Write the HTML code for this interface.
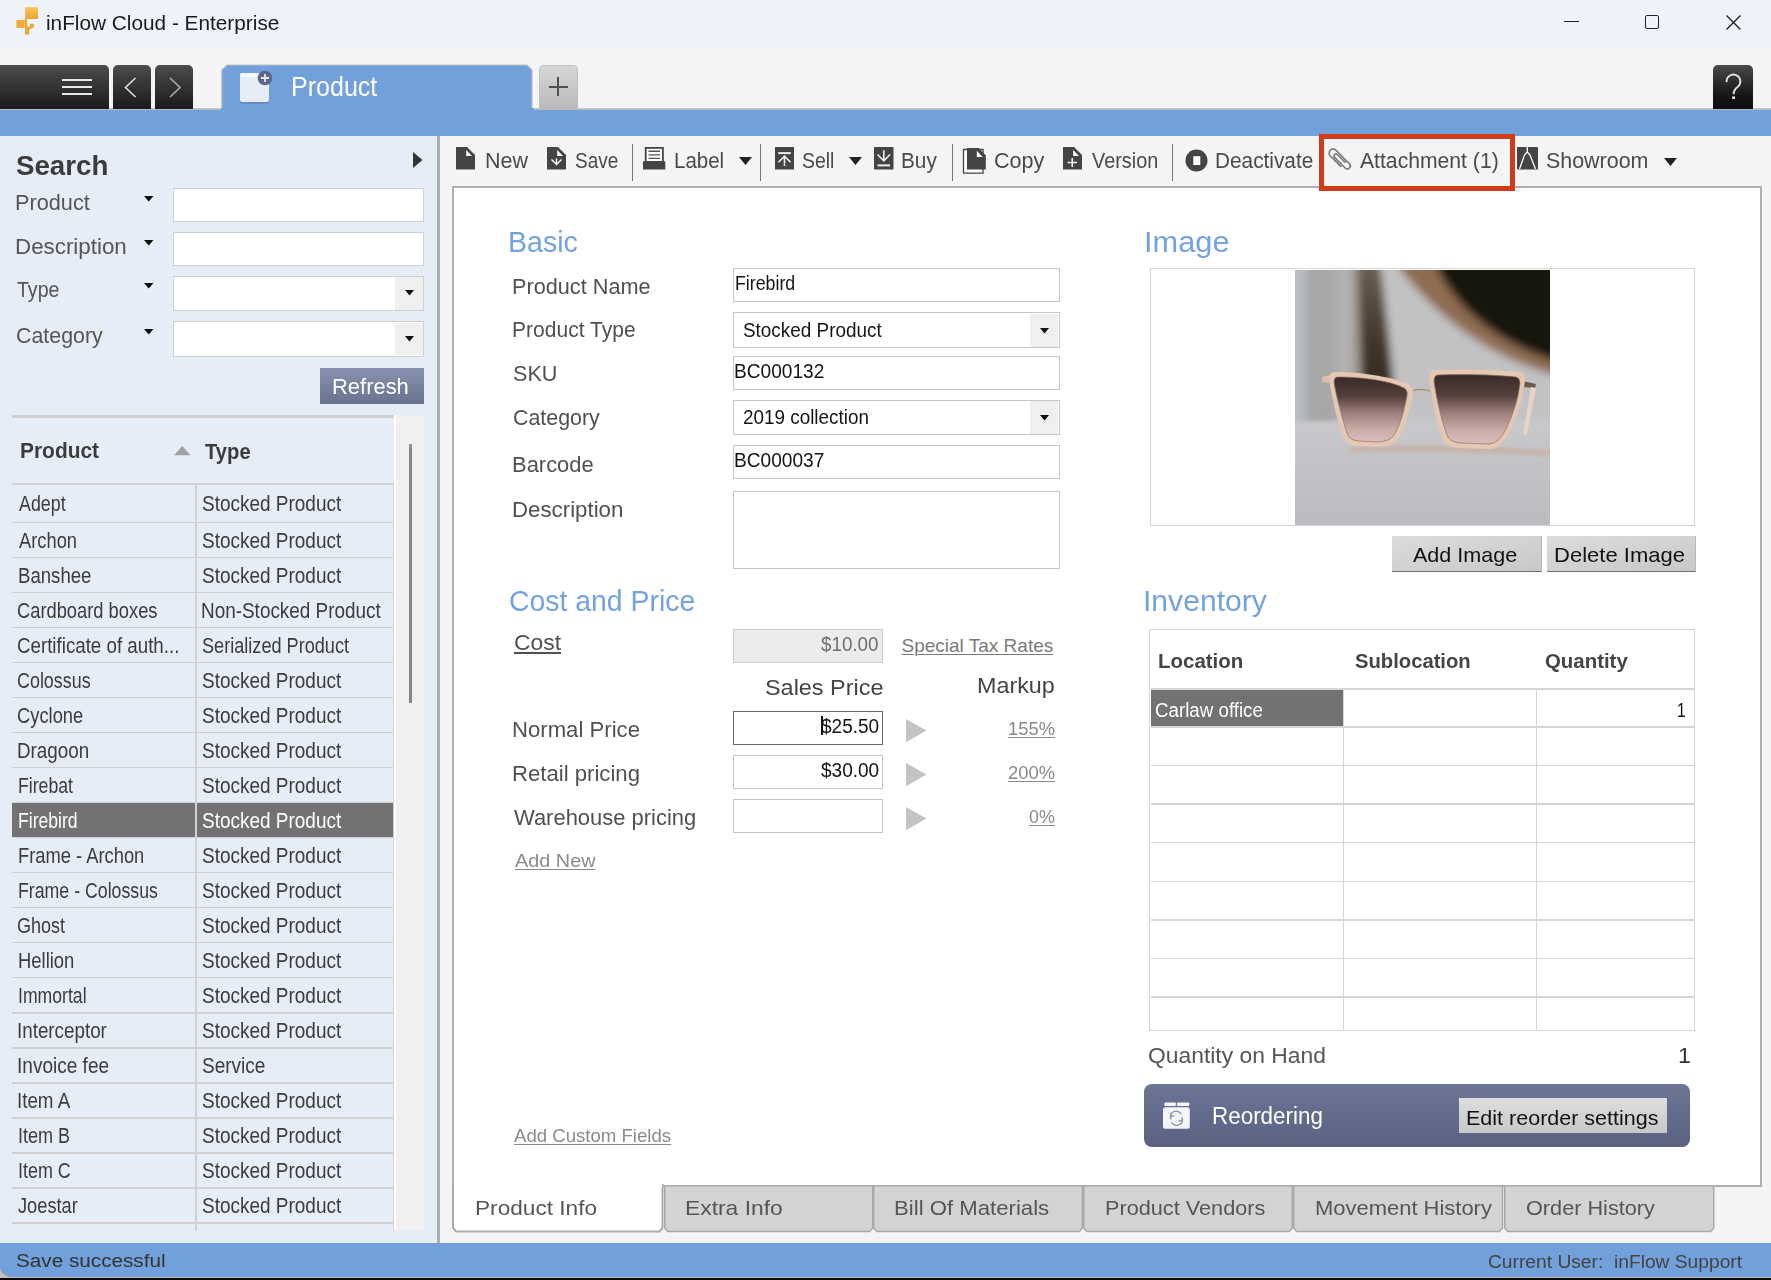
<!DOCTYPE html>
<html><head><meta charset="utf-8"><title>inFlow Cloud - Enterprise</title>
<style>
html,body{margin:0;padding:0;}
body{width:1771px;height:1280px;position:relative;overflow:hidden;background:#f4f4f4;font-family:"Liberation Sans",sans-serif;}
svg{overflow:visible}
</style></head><body>
<div style="position:absolute;left:0px;top:0px;width:1771px;height:48.6px;background:#eef3fa"></div>
<svg style="position:absolute;left:14px;top:6px;" width="26" height="30" viewBox="0 0 26 30">
<defs><linearGradient id="lg1" x1="0" y1="0" x2="0" y2="1"><stop offset="0" stop-color="#f7c64e"/><stop offset="1" stop-color="#eba335"/></linearGradient></defs>
<rect x="11.2" y="1.2" width="12.8" height="11.8" fill="url(#lg1)"/>
<rect x="2.4" y="14" width="8.2" height="8" fill="#eead3c"/>
<path d="M11.9 12.5 V18.3 Q11.9 22.3 14.9 22.3 Q17.1 22.3 17.6 20" fill="none" stroke="#edab3a" stroke-width="2.5"/><circle cx="17.9" cy="19.8" r="2.3" fill="#eeaa3a"/><rect x="11" y="22" width="4.25" height="6.7" fill="#eca536"/>
</svg>
<div style="position:absolute;left:1564px;top:21px;width:15px;height:1.3px;background:#222"></div>
<div style="position:absolute;left:1645px;top:14.5px;width:12px;height:12px;border:1.4px solid #222;border-radius:2px"></div>
<svg style="position:absolute;left:1726px;top:14.5px;" width="15" height="15" viewBox="0 0 15 15"><path d="M0.5 0.5 L14.5 14.5 M14.5 0.5 L0.5 14.5" stroke="#222" stroke-width="1.4"/></svg>
<div style="position:absolute;left:0px;top:48.6px;width:1771px;height:62px;background:#f4f4f4"></div>
<div style="position:absolute;left:0px;top:108.2px;width:1771px;height:2px;background:linear-gradient(#d0d0d0,#a9b0bc)"></div>
<div style="position:absolute;left:0px;top:65px;width:109px;height:44px;background:linear-gradient(#4c4c4c,#1a1a1a);border-radius:0 5px 0 0"></div>
<div style="position:absolute;left:113px;top:65px;width:38px;height:44px;background:linear-gradient(#4c4c4c,#1a1a1a);border-radius:5px 5px 0 0"></div>
<div style="position:absolute;left:155px;top:65px;width:38px;height:44px;background:linear-gradient(#4c4c4c,#1a1a1a);border-radius:5px 5px 0 0"></div>
<div style="position:absolute;left:62px;top:79px;width:30px;height:2px;background:#e8e8e8"></div>
<div style="position:absolute;left:62px;top:86px;width:30px;height:2px;background:#e8e8e8"></div>
<div style="position:absolute;left:62px;top:93px;width:30px;height:2px;background:#e8e8e8"></div>
<svg style="position:absolute;left:113px;top:65px;" width="38" height="44" viewBox="0 0 38 44"><path d="M22.5 13 L12.5 22.5 L22.5 32" fill="none" stroke="#ddd" stroke-width="1.6"/></svg>
<svg style="position:absolute;left:155px;top:65px;" width="38" height="44" viewBox="0 0 38 44"><path d="M15 13 L25 22.5 L15 32" fill="none" stroke="#aaa" stroke-width="1.6"/></svg>
<svg style="position:absolute;left:221px;top:64px;" width="313" height="47" viewBox="0 0 313 47"><path d="M0.8 47 L0.8 6 L6 1 L306 1 L311 6 L311 47 Z" fill="#72a0da" stroke="#bdbdbd" stroke-width="1.2"/><rect x="0" y="44" width="313" height="4" fill="#72a0da"/></svg>
<svg style="position:absolute;left:238px;top:70px;" width="36" height="36" viewBox="0 0 36 36">
<rect x="2" y="5" width="29" height="29" rx="2.5" fill="#4e6a98" opacity="0.35"/>
<rect x="2" y="3" width="29" height="29" rx="2.5" fill="#e6edf8"/>
<rect x="2" y="3" width="29" height="4" rx="2" fill="#f4f7fb"/>
<circle cx="27" cy="8" r="7.3" fill="#5b6786"/>
<path d="M23 8 H31 M27 4 V12" stroke="#e8e8e8" stroke-width="1.8"/>
</svg>
<div style="position:absolute;left:538.5px;top:65px;width:39.5px;height:44.5px;background:linear-gradient(#d6d6d6,#b9b9b9);border:1px solid #c0c0c0;border-bottom:none;border-radius:5px 5px 0 0;box-sizing:border-box"></div>
<div style="position:absolute;left:548.8px;top:85.5px;width:19px;height:2px;background:#505050"></div>
<div style="position:absolute;left:557.2px;top:77px;width:2px;height:19px;background:#505050"></div>
<div style="position:absolute;left:1712.7px;top:64.5px;width:40.3px;height:44.5px;background:linear-gradient(#4a4a4a,#151515 70%,#0e0e0e);border-radius:5px 5px 0 0"></div>
<svg style="position:absolute;left:1712.7px;top:64.5px;" width="40.3" height="44.5" viewBox="0 0 40.3 44.5"><path d="M13.6 17.2 A6.9 6.9 0 1 1 24.8 21.8 Q20.6 25 20.6 29.3" fill="none" stroke="#e2e2e2" stroke-width="1.9"/><rect x="19.2" y="31.4" width="2.8" height="2.6" fill="#e2e2e2"/></svg>
<div style="position:absolute;left:0px;top:110.2px;width:1771px;height:26.3px;background:#72a0da"></div>
<div style="position:absolute;left:0px;top:136px;width:436.5px;height:1107px;background:#e6edf7"></div>
<div style="position:absolute;left:436.5px;top:136px;width:3.5px;height:1107px;background:#adadad"></div>
<svg style="position:absolute;left:413px;top:152px;" width="10" height="16" viewBox="0 0 10 16"><path d="M0 0 L9.5 8 L0 16 Z" fill="#333"/></svg>
<svg style="position:absolute;left:144px;top:196.2px;" width="10" height="6" viewBox="0 0 10 6"><path d="M0 0 L9.5 0 L4.75 5.5 Z" fill="#111"/></svg>
<div style="position:absolute;left:172.8px;top:188px;width:251px;height:33.8px;background:#fff;border:1.5px solid #d0d0d0;box-sizing:border-box"></div>
<svg style="position:absolute;left:144px;top:239.7px;" width="10" height="6" viewBox="0 0 10 6"><path d="M0 0 L9.5 0 L4.75 5.5 Z" fill="#111"/></svg>
<div style="position:absolute;left:172.8px;top:232px;width:251px;height:33.8px;background:#fff;border:1.5px solid #d0d0d0;box-sizing:border-box"></div>
<svg style="position:absolute;left:144px;top:283.3px;" width="10" height="6" viewBox="0 0 10 6"><path d="M0 0 L9.5 0 L4.75 5.5 Z" fill="#111"/></svg>
<div style="position:absolute;left:172.8px;top:275.5px;width:251px;height:35.5px;background:#fff;border:1.5px solid #d0d0d0;box-sizing:border-box"></div>
<svg style="position:absolute;left:144px;top:328.7px;" width="10" height="6" viewBox="0 0 10 6"><path d="M0 0 L9.5 0 L4.75 5.5 Z" fill="#111"/></svg>
<div style="position:absolute;left:172.8px;top:321px;width:251px;height:35.5px;background:#fff;border:1.5px solid #d0d0d0;box-sizing:border-box"></div>
<div style="position:absolute;left:395px;top:277.0px;width:27.5px;height:32.5px;background:#efefef"></div>
<svg style="position:absolute;left:405px;top:290.3px;" width="9" height="6" viewBox="0 0 9 6"><path d="M0 0 L9 0 L4.5 5.6 Z" fill="#111"/></svg>
<div style="position:absolute;left:395px;top:322.5px;width:27.5px;height:32.5px;background:#efefef"></div>
<svg style="position:absolute;left:405px;top:335.8px;" width="9" height="6" viewBox="0 0 9 6"><path d="M0 0 L9 0 L4.5 5.6 Z" fill="#111"/></svg>
<div style="position:absolute;left:319.5px;top:368px;width:104.5px;height:36px;background:linear-gradient(#8891ad,#69728f)"></div>
<div style="position:absolute;left:11.5px;top:415.3px;width:383px;height:2.8px;background:#d0d0d0"></div>
<div style="position:absolute;left:394.4px;top:415px;width:1.6px;height:815px;background:#ffffff"></div>
<div style="position:absolute;left:396px;top:415px;width:28px;height:815px;background:#f0f0f0"></div>
<div style="position:absolute;left:408.7px;top:444.4px;width:3.4px;height:258.6px;background:linear-gradient(#9a9a9a,#858585 6px)"></div>
<svg style="position:absolute;left:174px;top:446px;" width="16.5" height="9.5" viewBox="0 0 16.5 9.5"><path d="M0 9.2 L8.25 0 L16.5 9.2 Z" fill="#a3a3a3"/></svg>
<div style="position:absolute;left:11.5px;top:483px;width:382.5px;height:2px;background:#d2d2d2"></div>
<div style="position:absolute;left:12px;top:521.5px;width:382px;height:1.6px;background:#d0d0d0"></div>
<div style="position:absolute;left:12px;top:556.53px;width:382px;height:1.6px;background:#d0d0d0"></div>
<div style="position:absolute;left:12px;top:591.56px;width:382px;height:1.6px;background:#d0d0d0"></div>
<div style="position:absolute;left:12px;top:626.59px;width:382px;height:1.6px;background:#d0d0d0"></div>
<div style="position:absolute;left:12px;top:661.62px;width:382px;height:1.6px;background:#d0d0d0"></div>
<div style="position:absolute;left:12px;top:696.65px;width:382px;height:1.6px;background:#d0d0d0"></div>
<div style="position:absolute;left:12px;top:731.6800000000001px;width:382px;height:1.6px;background:#d0d0d0"></div>
<div style="position:absolute;left:12px;top:766.71px;width:382px;height:1.6px;background:#d0d0d0"></div>
<div style="position:absolute;left:12px;top:801.74px;width:382px;height:1.6px;background:#d0d0d0"></div>
<div style="position:absolute;left:12px;top:803.3399999999999px;width:182.5px;height:34.229999999999976px;background:#727272"></div>
<div style="position:absolute;left:197px;top:803.3399999999999px;width:196px;height:34.229999999999976px;background:#727272"></div>
<div style="position:absolute;left:12px;top:836.77px;width:382px;height:1.6px;background:#d0d0d0"></div>
<div style="position:absolute;left:12px;top:871.8px;width:382px;height:1.6px;background:#d0d0d0"></div>
<div style="position:absolute;left:12px;top:906.83px;width:382px;height:1.6px;background:#d0d0d0"></div>
<div style="position:absolute;left:12px;top:941.86px;width:382px;height:1.6px;background:#d0d0d0"></div>
<div style="position:absolute;left:12px;top:976.89px;width:382px;height:1.6px;background:#d0d0d0"></div>
<div style="position:absolute;left:12px;top:1011.9200000000001px;width:382px;height:1.6px;background:#d0d0d0"></div>
<div style="position:absolute;left:12px;top:1046.95px;width:382px;height:1.6px;background:#d0d0d0"></div>
<div style="position:absolute;left:12px;top:1081.98px;width:382px;height:1.6px;background:#d0d0d0"></div>
<div style="position:absolute;left:12px;top:1117.01px;width:382px;height:1.6px;background:#d0d0d0"></div>
<div style="position:absolute;left:12px;top:1152.04px;width:382px;height:1.6px;background:#d0d0d0"></div>
<div style="position:absolute;left:12px;top:1187.07px;width:382px;height:1.6px;background:#d0d0d0"></div>
<div style="position:absolute;left:12px;top:1222.1000000000001px;width:382px;height:1.6px;background:#d0d0d0"></div>
<div style="position:absolute;left:195.2px;top:485px;width:1.7px;height:745.5px;background:#d0d0d0"></div>
<div style="position:absolute;left:392.6px;top:485px;width:1.6px;height:745.5px;background:#d0d0d0"></div>
<div style="position:absolute;left:440px;top:136px;width:1331px;height:1107px;background:#f4f4f4"></div>
<svg style="position:absolute;left:456px;top:147px;" width="19" height="23" viewBox="0 0 19 23"><path d="M0 0 H11 L19 8 V22.5 H0 Z" fill="#444"/><path d="M10.2 3 V9 H16 Z" fill="#fff"/></svg>
<svg style="position:absolute;left:547px;top:147px;" width="19" height="23" viewBox="0 0 19 23"><path d="M0 0 H11 L19 8 V22.5 H0 Z" fill="#444"/><path d="M10.2 3 V9 H16 Z" fill="#fff"/><path d="M4.5 12.5 L9.5 17.5 L14.5 12.5 M9.5 11.5 V18" fill="none" stroke="#fff" stroke-width="1.4"/></svg>
<svg style="position:absolute;left:643.3px;top:147px;" width="23" height="23" viewBox="0 0 23 23"><rect x="2.7" y="0.9" width="17.2" height="14" fill="#fff" stroke="#444" stroke-width="1.8"/><path d="M5.5 4.3 H17 M5.5 7.9 H17 M5.5 11.4 H17" stroke="#555" stroke-width="1.4"/><rect x="0" y="14.3" width="22.3" height="8.2" fill="#444"/></svg>
<div style="position:absolute;left:631.5px;top:143.5px;width:1.5px;height:37px;background:#777"></div>
<svg style="position:absolute;left:739px;top:157px;" width="13" height="8" viewBox="0 0 13 8"><path d="M0 0 H13 L6.5 8 Z" fill="#222"/></svg>
<div style="position:absolute;left:759.5px;top:143.5px;width:1.5px;height:37px;background:#777"></div>
<svg style="position:absolute;left:774.6px;top:147.1px;" width="19" height="22.5" viewBox="0 0 19 22.5"><rect width="19" height="22.5" fill="#444"/><path d="M3.2 6.1 H15.8" stroke="#eee" stroke-width="2"/><path d="M3.5 15.2 L9.5 9.2 L15.5 15.2 M9.5 9.5 V19" fill="none" stroke="#eee" stroke-width="1.6"/></svg>
<svg style="position:absolute;left:849px;top:157px;" width="13" height="8" viewBox="0 0 13 8"><path d="M0 0 H13 L6.5 8 Z" fill="#222"/></svg>
<svg style="position:absolute;left:874px;top:147.1px;" width="19.5" height="22.5" viewBox="0 0 19.5 22.5"><rect width="19.5" height="22.5" fill="#444"/><path d="M3.5 18.4 H16" stroke="#eee" stroke-width="2"/><path d="M3.5 7.5 L9.8 13.8 L16 7.5 M9.8 3.2 V14" fill="none" stroke="#eee" stroke-width="1.6"/></svg>
<div style="position:absolute;left:951.5px;top:143.5px;width:1.5px;height:37px;background:#777"></div>
<svg style="position:absolute;left:963.4px;top:146.5px;" width="24" height="27" viewBox="0 0 24 27"><path d="M0.5 2.5 H20 V26.2 H0.5 Z" fill="#fff" stroke="#444" stroke-width="1.3"/><path d="M4 1 H15.5 L22.8 8.3 V22.5 H4 Z" fill="#444"/><path d="M13.8 3.8 V10 H19.7 Z" fill="#fff"/></svg>
<svg style="position:absolute;left:1063px;top:147px;" width="19.5" height="23" viewBox="0 0 19.5 23"><path d="M0 0 H11 L19 8 V22.5 H0 Z" fill="#444"/><path d="M10.2 3 V9 H16 Z" fill="#fff"/><path d="M4.5 15.5 H14 M9.25 11 V20" stroke="#eee" stroke-width="1.7"/></svg>
<div style="position:absolute;left:1171.5px;top:143.5px;width:1.5px;height:37px;background:#777"></div>
<svg style="position:absolute;left:1184.5px;top:148.5px;" width="23" height="23" viewBox="0 0 23 23"><circle cx="11.5" cy="11.5" r="11" fill="#444"/><rect x="8.3" y="7.2" width="7" height="8.8" fill="#fff"/></svg>
<svg style="position:absolute;left:1326.5px;top:146.5px;" width="25" height="25" viewBox="0 0 25 25"><g transform="translate(12.5 12.5) rotate(-45) translate(-5 -13.5)" fill="none" stroke="#777" stroke-width="1.6"><path d="M1 20 V4.5 A4 4 0 0 1 9 4.5 V23.5 A3 3 0 0 1 3 23.5 V8.5 A2 2 0 0 1 7 8.5 V20"/></g></svg>
<svg style="position:absolute;left:1516.8px;top:147px;" width="21" height="22.6" viewBox="0 0 21 22.6"><rect width="21" height="22.6" rx="1" fill="#444"/><path d="M10.3 0 V5 L7.5 8 L2.5 22 M10.3 5 L13 8 L18.5 22" fill="none" stroke="#fff" stroke-width="1.3"/></svg>
<svg style="position:absolute;left:1663.5px;top:158px;" width="13" height="8" viewBox="0 0 13 8"><path d="M0 0 H13 L6.5 8 Z" fill="#222"/></svg>
<div style="position:absolute;left:1319px;top:134px;width:196px;height:56.5px;border:5px solid #d13b1c;box-sizing:border-box;z-index:8"></div>
<div style="position:absolute;left:452px;top:186px;width:1310px;height:1001px;background:#fff;border:2px solid #b0b0b0;box-sizing:border-box"></div>
<div style="position:absolute;left:732.6px;top:268.2px;width:327px;height:34.30000000000001px;background:#fff;border:1.5px solid #c6c6c6;box-sizing:border-box"></div>
<div style="position:absolute;left:732.6px;top:312px;width:327px;height:36px;background:#fff;border:1.5px solid #c6c6c6;box-sizing:border-box"></div>
<div style="position:absolute;left:1030.3px;top:313.5px;width:27.8px;height:33px;background:#efefef"></div>
<svg style="position:absolute;left:1040.3px;top:327.5px;" width="9" height="6" viewBox="0 0 9 6"><path d="M0 0 L9 0 L4.5 5.6 Z" fill="#111"/></svg>
<div style="position:absolute;left:732.6px;top:356px;width:327px;height:34.30000000000001px;background:#fff;border:1.5px solid #c6c6c6;box-sizing:border-box"></div>
<div style="position:absolute;left:732.6px;top:399.5px;width:327px;height:35.69999999999999px;background:#fff;border:1.5px solid #c6c6c6;box-sizing:border-box"></div>
<div style="position:absolute;left:1030.3px;top:401.0px;width:27.8px;height:32.69999999999999px;background:#efefef"></div>
<svg style="position:absolute;left:1040.3px;top:414.85px;" width="9" height="6" viewBox="0 0 9 6"><path d="M0 0 L9 0 L4.5 5.6 Z" fill="#111"/></svg>
<div style="position:absolute;left:732.6px;top:445px;width:327px;height:34.19999999999999px;background:#fff;border:1.5px solid #c6c6c6;box-sizing:border-box"></div>
<div style="position:absolute;left:732.6px;top:491px;width:327px;height:77.5px;background:#fff;border:1.5px solid #c6c6c6;box-sizing:border-box"></div>
<div style="position:absolute;left:732.6px;top:628.8px;width:150px;height:34px;background:#ececec;border:1.5px solid #cdcdcd;box-sizing:border-box"></div>
<div style="position:absolute;left:732.6px;top:711.2px;width:150.5px;height:34.299999999999955px;background:#fff;border:1.8px solid #6a6a6a;box-sizing:border-box"></div>
<svg style="position:absolute;left:906.2px;top:718.7px;" width="21" height="23.5" viewBox="0 0 21 23.5"><path d="M0 0 L20.5 11.6 L0 23.2 Z" fill="#c4c4c4"/></svg>
<div style="position:absolute;left:732.6px;top:755.3px;width:150.5px;height:33.90000000000009px;background:#fff;border:1.5px solid #c6c6c6;box-sizing:border-box"></div>
<svg style="position:absolute;left:906.2px;top:762.8px;" width="21" height="23.5" viewBox="0 0 21 23.5"><path d="M0 0 L20.5 11.6 L0 23.2 Z" fill="#c4c4c4"/></svg>
<div style="position:absolute;left:732.6px;top:799.4px;width:150.5px;height:33.200000000000045px;background:#fff;border:1.5px solid #c6c6c6;box-sizing:border-box"></div>
<svg style="position:absolute;left:906.2px;top:806.9px;" width="21" height="23.5" viewBox="0 0 21 23.5"><path d="M0 0 L20.5 11.6 L0 23.2 Z" fill="#c4c4c4"/></svg>
<div style="position:absolute;left:821px;top:715.5px;width:1.5px;height:19px;background:#111;z-index:9"></div>
<div style="position:absolute;left:1149.5px;top:268.2px;width:545.5px;height:258px;background:#fff;border:1.5px solid #d4d4d4;box-sizing:border-box"></div>
<svg style="position:absolute;left:1294.8px;top:269.6px;" width="255" height="255" viewBox="0 0 255 255">
<defs>
<filter id="b6" x="-30%" y="-30%" width="160%" height="160%"><feGaussianBlur stdDeviation="4"/></filter>
<filter id="b2" x="-30%" y="-30%" width="160%" height="160%"><feGaussianBlur stdDeviation="2"/></filter>
<filter id="b1"><feGaussianBlur stdDeviation="0.6"/></filter>
<linearGradient id="band" x1="0" y1="0" x2="0" y2="1"><stop offset="0" stop-color="#6e6152"/><stop offset="0.45" stop-color="#43382d"/><stop offset="1" stop-color="#231c16"/></linearGradient>
<linearGradient id="lens" x1="0" y1="0" x2="0" y2="1"><stop offset="0" stop-color="#3a2a28"/><stop offset="0.3" stop-color="#54403c"/><stop offset="0.55" stop-color="#9c7f7a"/><stop offset="0.8" stop-color="#c9aca7"/><stop offset="1" stop-color="#d7bdb8"/></linearGradient>
<linearGradient id="table" x1="0" y1="0" x2="0" y2="1"><stop offset="0" stop-color="#c8c9cc"/><stop offset="1" stop-color="#b8b9bd"/></linearGradient>
<clipPath id="pc"><rect width="255" height="255"/></clipPath>
</defs>
<g clip-path="url(#pc)">
<rect width="255" height="255" fill="#bfc0c3"/>
<g filter="url(#b6)">
<rect x="-10" y="-10" width="20" height="180" fill="#b9bdc1"/>
<rect x="10" y="-10" width="32" height="180" fill="#a6a7a7"/>
<rect x="42" y="-10" width="14" height="180" fill="#b3b3b4"/>
<rect x="56" y="-10" width="10" height="180" fill="#a49f99"/>
<path d="M62 -10 L85 -10 L106 165 L68 165 Z" fill="url(#band)"/>
<path d="M86 -10 L270 -10 L270 165 L104 165 Z" fill="#c2c2c5"/>
<path d="M98 -10 L142 -10 Q165 55 270 88 L270 108 Q165 82 98 -10 Z" fill="#8e6c51"/>
<path d="M138 -10 L270 -10 L270 94 Q172 66 138 -10 Z" fill="#16130f"/>
</g>
<g filter="url(#b2)">
<path d="M-10 152 Q100 148 270 150 L270 270 L-10 270 Z" fill="url(#table)"/>
<path d="M55 177 Q150 173 262 181 L262 186 Q150 180 55 182 Z" fill="#c7b0a6"/>
</g>
<g filter="url(#b1)">
<path d="M27 107 L36 105 L36 113 L27 112 Z" fill="#d9c0ad"/>
<path d="M228 111 L241 114 L240 118 L228 117 Z" fill="#6f5a48"/>
<path d="M236 117 L241 118 L232 165 L228 164 Z" fill="#e6d4c8"/>
<path d="M116 121 Q125 118 135 121" fill="none" stroke="#a58c70" stroke-width="1.3"/>
<path d="M40 102 C70 102 100 108 113 114 Q119 117 118 124 C115 140 110 158 103 169 Q97 177 82 177 L62 176 Q50 175 47 166 C42 148 36 125 34 108 Q34 102 40 102 Z" fill="#e4c8b4"/>
<path d="M43 107 C72 107 98 112 109 118 Q113 120 112 126 C109 141 105 156 99 165 Q94 172 82 172 L63 171 Q54 170 52 163 C47 147 41 126 39 112 Q39 107 43 107 Z" fill="url(#lens)" stroke="#8e7264" stroke-width="0.7"/>
<path d="M140 100 C170 99 205 100 225 102 Q231 103 230 110 C228 130 222 148 214 163 Q207 178 195 179 L165 178 Q150 177 147 168 C141 150 136 125 134 107 Q134 100 140 100 Z" fill="#e4c8b4"/>
<path d="M143 105 C172 104 203 105 221 107 Q225 108 225 113 C223 131 217 147 210 161 Q204 173 194 174 L166 173 Q154 172 152 165 C146 149 141 126 139 111 Q139 105 143 105 Z" fill="url(#lens)" stroke="#8e7264" stroke-width="0.7"/>
</g>
</g>
</svg>
<div style="position:absolute;left:1392px;top:535.5px;width:149.5px;height:36.5px;background:linear-gradient(170deg,#dcdcdc,#c8c8c8);border-bottom:1.8px solid #707070;border-right:1px solid #b8b8b8;box-sizing:border-box"></div>
<div style="position:absolute;left:1546.5px;top:535.5px;width:149px;height:36.5px;background:linear-gradient(170deg,#dcdcdc,#c8c8c8);border-bottom:1.8px solid #707070;border-right:1px solid #b8b8b8;box-sizing:border-box"></div>
<div style="position:absolute;left:1149.4px;top:628.8px;width:545.5px;height:402px;background:#fff;border:1.5px solid #d4d4d4;box-sizing:border-box"></div>
<div style="position:absolute;left:1150.5px;top:688.4000000000001px;width:543.5px;height:1.6px;background:#d6d6d6"></div>
<div style="position:absolute;left:1150.5px;top:726.2px;width:543.5px;height:1.6px;background:#d6d6d6"></div>
<div style="position:absolute;left:1150.5px;top:764.7px;width:543.5px;height:1.6px;background:#d6d6d6"></div>
<div style="position:absolute;left:1150.5px;top:803.3000000000001px;width:543.5px;height:1.6px;background:#d6d6d6"></div>
<div style="position:absolute;left:1150.5px;top:841.9000000000001px;width:543.5px;height:1.6px;background:#d6d6d6"></div>
<div style="position:absolute;left:1150.5px;top:880.5px;width:543.5px;height:1.6px;background:#d6d6d6"></div>
<div style="position:absolute;left:1150.5px;top:919.1px;width:543.5px;height:1.6px;background:#d6d6d6"></div>
<div style="position:absolute;left:1150.5px;top:957.7px;width:543.5px;height:1.6px;background:#d6d6d6"></div>
<div style="position:absolute;left:1150.5px;top:996.3000000000001px;width:543.5px;height:1.6px;background:#d6d6d6"></div>
<div style="position:absolute;left:1150.9px;top:690px;width:192.5px;height:36.4px;background:#727272"></div>
<div style="position:absolute;left:1342.7px;top:689.2px;width:1.6px;height:341px;background:#d6d6d6"></div>
<div style="position:absolute;left:1535.7px;top:689.2px;width:1.6px;height:341px;background:#d6d6d6"></div>
<div style="position:absolute;left:1143.9px;top:1084px;width:546px;height:63px;background:linear-gradient(#6c7595,#5a6284);border-radius:8px"></div>
<svg style="position:absolute;left:1163.4px;top:1102.4px;" width="27.5" height="27" viewBox="0 0 27.5 27"><rect x="1.4" y="0.6" width="11.5" height="3.4" rx="1" fill="#f4f5f8"/><rect x="13.9" y="0.6" width="12.4" height="3.4" rx="1" fill="#f4f5f8"/><rect x="0" y="5.3" width="26.8" height="21.5" rx="2.5" fill="#f4f5f8"/><path d="M8 17.5 A5.6 5.6 0 0 1 18.2 12.2 M18.8 15 A5.6 5.6 0 0 1 8.6 20.2" fill="none" stroke="#8d93a6" stroke-width="1.3"/><path d="M8.3 11 L8 14.8 L11.3 13.5 M18.5 22 L18.8 18 L15.6 19.4" fill="none" stroke="#8d93a6" stroke-width="1.2"/></svg>
<div style="position:absolute;left:1459px;top:1098px;width:208px;height:35px;background:linear-gradient(#dedede,#c8c8c8)"></div>
<svg style="position:absolute;left:452px;top:1184px;" width="211.5" height="48.5" viewBox="0 0 211.5 48.5"><path d="M1 0 V44 L4 47.5 H207.5 L210.5 44 V0" fill="#ffffff" stroke="#ababab" stroke-width="2"/><rect x="2" y="0" width="208.0" height="3.5" fill="#fff"/></svg>
<svg style="position:absolute;left:663.5px;top:1185px;" width="209.5" height="47.5" viewBox="0 0 209.5 47.5"><path d="M0.75 0.75 V43 L3.8 46.5 H205.7 L208.75 43 V0.75 Z" fill="#d3d3d3" stroke="#a9a9a9" stroke-width="1.5"/></svg>
<svg style="position:absolute;left:873px;top:1185px;" width="210.20000000000005" height="47.5" viewBox="0 0 210.20000000000005 47.5"><path d="M0.75 0.75 V43 L3.8 46.5 H206.40000000000003 L209.45000000000005 43 V0.75 Z" fill="#d3d3d3" stroke="#a9a9a9" stroke-width="1.5"/></svg>
<svg style="position:absolute;left:1083.2px;top:1185px;" width="210.0" height="47.5" viewBox="0 0 210.0 47.5"><path d="M0.75 0.75 V43 L3.8 46.5 H206.2 L209.25 43 V0.75 Z" fill="#d3d3d3" stroke="#a9a9a9" stroke-width="1.5"/></svg>
<svg style="position:absolute;left:1293.2px;top:1185px;" width="210.29999999999995" height="47.5" viewBox="0 0 210.29999999999995 47.5"><path d="M0.75 0.75 V43 L3.8 46.5 H206.49999999999994 L209.54999999999995 43 V0.75 Z" fill="#d3d3d3" stroke="#a9a9a9" stroke-width="1.5"/></svg>
<svg style="position:absolute;left:1503.5px;top:1185px;" width="210.5" height="47.5" viewBox="0 0 210.5 47.5"><path d="M0.75 0.75 V43 L3.8 46.5 H206.7 L209.75 43 V0.75 Z" fill="#d3d3d3" stroke="#a9a9a9" stroke-width="1.5"/></svg>
<div style="position:absolute;left:0px;top:1243px;width:1771px;height:35px;background:#72a0da"></div>
<div style="position:absolute;left:0px;top:1277.2px;width:1771px;height:0.8px;background:#c9bdb9"></div>
<div style="position:absolute;left:0px;top:1278px;width:1771px;height:2px;background:#0a0a0a"></div>
<svg style="position:absolute;left:0px;top:1268px;" width="12" height="10" viewBox="0 0 12 10"><path d="M0 0 Q2 8 11 9.5 L0 9.5 Z" fill="#cbbdb9"/></svg>
<div style="position:absolute;left:46.01px;top:12.00px;white-space:pre;font-family:'Liberation Sans';font-size:21px;font-weight:400;line-height:21px;color:#1a1a1a;z-index:5;transform:scaleX(0.9897);transform-origin:0 0;">inFlow Cloud - Enterprise</div>
<div style="position:absolute;left:291.21px;top:73.00px;white-space:pre;font-family:'Liberation Sans';font-size:28px;font-weight:400;line-height:28px;color:#ffffff;z-index:5;transform:scaleX(0.8947);transform-origin:0 0;">Product</div>
<div style="position:absolute;left:16.01px;top:152.00px;white-space:pre;font-family:'Liberation Sans';font-size:28px;font-weight:700;line-height:28px;color:#3c3c3c;z-index:5;transform:scaleX(0.9890);transform-origin:0 0;">Search</div>
<div style="position:absolute;left:15.03px;top:192.20px;white-space:pre;font-family:'Liberation Sans';font-size:22px;font-weight:400;line-height:22px;color:#555;z-index:5;transform:scaleX(0.9865);transform-origin:0 0;">Product</div>
<div style="position:absolute;left:14.97px;top:235.70px;white-space:pre;font-family:'Liberation Sans';font-size:22px;font-weight:400;line-height:22px;color:#555;z-index:5;transform:scaleX(1.0159);transform-origin:0 0;">Description</div>
<div style="position:absolute;left:17.00px;top:279.30px;white-space:pre;font-family:'Liberation Sans';font-size:22px;font-weight:400;line-height:22px;color:#555;z-index:5;transform:scaleX(0.8894);transform-origin:0 0;">Type</div>
<div style="position:absolute;left:16.03px;top:324.70px;white-space:pre;font-family:'Liberation Sans';font-size:22px;font-weight:400;line-height:22px;color:#555;z-index:5;transform:scaleX(0.9716);transform-origin:0 0;">Category</div>
<div style="position:absolute;left:332.21px;top:375.90px;white-space:pre;font-family:'Liberation Sans';font-size:22px;font-weight:400;line-height:22px;color:#ffffff;z-index:5;transform:scaleX(0.9973);transform-origin:0 0;">Refresh</div>
<div style="position:absolute;left:19.55px;top:440.00px;white-space:pre;font-family:'Liberation Sans';font-size:22px;font-weight:700;line-height:22px;color:#3c3c3c;z-index:5;transform:scaleX(0.9512);transform-origin:0 0;">Product</div>
<div style="position:absolute;left:205.20px;top:440.70px;white-space:pre;font-family:'Liberation Sans';font-size:22px;font-weight:700;line-height:22px;color:#3c3c3c;z-index:5;transform:scaleX(0.9184);transform-origin:0 0;">Type</div>
<div style="position:absolute;left:19.20px;top:493.00px;white-space:pre;font-family:'Liberation Sans';font-size:22px;font-weight:400;line-height:22px;color:#3c3c3c;z-index:5;transform:scaleX(0.8103);transform-origin:0 0;">Adept</div>
<div style="position:absolute;left:201.64px;top:493.00px;white-space:pre;font-family:'Liberation Sans';font-size:22px;font-weight:400;line-height:22px;color:#3c3c3c;z-index:5;transform:scaleX(0.8625);transform-origin:0 0;">Stocked Product</div>
<div style="position:absolute;left:19.20px;top:529.60px;white-space:pre;font-family:'Liberation Sans';font-size:22px;font-weight:400;line-height:22px;color:#3c3c3c;z-index:5;transform:scaleX(0.8319);transform-origin:0 0;">Archon</div>
<div style="position:absolute;left:201.64px;top:529.60px;white-space:pre;font-family:'Liberation Sans';font-size:22px;font-weight:400;line-height:22px;color:#3c3c3c;z-index:5;transform:scaleX(0.8625);transform-origin:0 0;">Stocked Product</div>
<div style="position:absolute;left:17.51px;top:564.63px;white-space:pre;font-family:'Liberation Sans';font-size:22px;font-weight:400;line-height:22px;color:#3c3c3c;z-index:5;transform:scaleX(0.8452);transform-origin:0 0;">Banshee</div>
<div style="position:absolute;left:201.64px;top:564.63px;white-space:pre;font-family:'Liberation Sans';font-size:22px;font-weight:400;line-height:22px;color:#3c3c3c;z-index:5;transform:scaleX(0.8625);transform-origin:0 0;">Stocked Product</div>
<div style="position:absolute;left:17.17px;top:599.66px;white-space:pre;font-family:'Liberation Sans';font-size:22px;font-weight:400;line-height:22px;color:#3c3c3c;z-index:5;transform:scaleX(0.8323);transform-origin:0 0;">Cardboard boxes</div>
<div style="position:absolute;left:200.78px;top:599.66px;white-space:pre;font-family:'Liberation Sans';font-size:22px;font-weight:400;line-height:22px;color:#3c3c3c;z-index:5;transform:scaleX(0.8599);transform-origin:0 0;">Non-Stocked Product</div>
<div style="position:absolute;left:17.15px;top:634.69px;white-space:pre;font-family:'Liberation Sans';font-size:22px;font-weight:400;line-height:22px;color:#3c3c3c;z-index:5;transform:scaleX(0.8511);transform-origin:0 0;">Certificate of auth...</div>
<div style="position:absolute;left:201.68px;top:634.69px;white-space:pre;font-family:'Liberation Sans';font-size:22px;font-weight:400;line-height:22px;color:#3c3c3c;z-index:5;transform:scaleX(0.8236);transform-origin:0 0;">Serialized Product</div>
<div style="position:absolute;left:17.19px;top:669.72px;white-space:pre;font-family:'Liberation Sans';font-size:22px;font-weight:400;line-height:22px;color:#3c3c3c;z-index:5;transform:scaleX(0.8135);transform-origin:0 0;">Colossus</div>
<div style="position:absolute;left:201.64px;top:669.72px;white-space:pre;font-family:'Liberation Sans';font-size:22px;font-weight:400;line-height:22px;color:#3c3c3c;z-index:5;transform:scaleX(0.8625);transform-origin:0 0;">Stocked Product</div>
<div style="position:absolute;left:17.17px;top:704.75px;white-space:pre;font-family:'Liberation Sans';font-size:22px;font-weight:400;line-height:22px;color:#3c3c3c;z-index:5;transform:scaleX(0.8333);transform-origin:0 0;">Cyclone</div>
<div style="position:absolute;left:201.64px;top:704.75px;white-space:pre;font-family:'Liberation Sans';font-size:22px;font-weight:400;line-height:22px;color:#3c3c3c;z-index:5;transform:scaleX(0.8625);transform-origin:0 0;">Stocked Product</div>
<div style="position:absolute;left:17.49px;top:739.78px;white-space:pre;font-family:'Liberation Sans';font-size:22px;font-weight:400;line-height:22px;color:#3c3c3c;z-index:5;transform:scaleX(0.8556);transform-origin:0 0;">Dragoon</div>
<div style="position:absolute;left:201.64px;top:739.78px;white-space:pre;font-family:'Liberation Sans';font-size:22px;font-weight:400;line-height:22px;color:#3c3c3c;z-index:5;transform:scaleX(0.8625);transform-origin:0 0;">Stocked Product</div>
<div style="position:absolute;left:17.59px;top:774.81px;white-space:pre;font-family:'Liberation Sans';font-size:22px;font-weight:400;line-height:22px;color:#3c3c3c;z-index:5;transform:scaleX(0.8030);transform-origin:0 0;">Firebat</div>
<div style="position:absolute;left:201.64px;top:774.81px;white-space:pre;font-family:'Liberation Sans';font-size:22px;font-weight:400;line-height:22px;color:#3c3c3c;z-index:5;transform:scaleX(0.8625);transform-origin:0 0;">Stocked Product</div>
<div style="position:absolute;left:17.60px;top:809.84px;white-space:pre;font-family:'Liberation Sans';font-size:22px;font-weight:400;line-height:22px;color:#ffffff;z-index:5;transform:scaleX(0.8000);transform-origin:0 0;">Firebird</div>
<div style="position:absolute;left:201.64px;top:809.84px;white-space:pre;font-family:'Liberation Sans';font-size:22px;font-weight:400;line-height:22px;color:#ffffff;z-index:5;transform:scaleX(0.8625);transform-origin:0 0;">Stocked Product</div>
<div style="position:absolute;left:17.53px;top:844.87px;white-space:pre;font-family:'Liberation Sans';font-size:22px;font-weight:400;line-height:22px;color:#3c3c3c;z-index:5;transform:scaleX(0.8331);transform-origin:0 0;">Frame - Archon</div>
<div style="position:absolute;left:201.64px;top:844.87px;white-space:pre;font-family:'Liberation Sans';font-size:22px;font-weight:400;line-height:22px;color:#3c3c3c;z-index:5;transform:scaleX(0.8625);transform-origin:0 0;">Stocked Product</div>
<div style="position:absolute;left:17.59px;top:879.90px;white-space:pre;font-family:'Liberation Sans';font-size:22px;font-weight:400;line-height:22px;color:#3c3c3c;z-index:5;transform:scaleX(0.8058);transform-origin:0 0;">Frame - Colossus</div>
<div style="position:absolute;left:201.64px;top:879.90px;white-space:pre;font-family:'Liberation Sans';font-size:22px;font-weight:400;line-height:22px;color:#3c3c3c;z-index:5;transform:scaleX(0.8625);transform-origin:0 0;">Stocked Product</div>
<div style="position:absolute;left:17.18px;top:914.93px;white-space:pre;font-family:'Liberation Sans';font-size:22px;font-weight:400;line-height:22px;color:#3c3c3c;z-index:5;transform:scaleX(0.8190);transform-origin:0 0;">Ghost</div>
<div style="position:absolute;left:201.64px;top:914.93px;white-space:pre;font-family:'Liberation Sans';font-size:22px;font-weight:400;line-height:22px;color:#3c3c3c;z-index:5;transform:scaleX(0.8625);transform-origin:0 0;">Stocked Product</div>
<div style="position:absolute;left:17.52px;top:949.96px;white-space:pre;font-family:'Liberation Sans';font-size:22px;font-weight:400;line-height:22px;color:#3c3c3c;z-index:5;transform:scaleX(0.8375);transform-origin:0 0;">Hellion</div>
<div style="position:absolute;left:201.64px;top:949.96px;white-space:pre;font-family:'Liberation Sans';font-size:22px;font-weight:400;line-height:22px;color:#3c3c3c;z-index:5;transform:scaleX(0.8625);transform-origin:0 0;">Stocked Product</div>
<div style="position:absolute;left:17.60px;top:984.99px;white-space:pre;font-family:'Liberation Sans';font-size:22px;font-weight:400;line-height:22px;color:#3c3c3c;z-index:5;transform:scaleX(0.8012);transform-origin:0 0;">Immortal</div>
<div style="position:absolute;left:201.64px;top:984.99px;white-space:pre;font-family:'Liberation Sans';font-size:22px;font-weight:400;line-height:22px;color:#3c3c3c;z-index:5;transform:scaleX(0.8625);transform-origin:0 0;">Stocked Product</div>
<div style="position:absolute;left:17.49px;top:1020.02px;white-space:pre;font-family:'Liberation Sans';font-size:22px;font-weight:400;line-height:22px;color:#3c3c3c;z-index:5;transform:scaleX(0.8544);transform-origin:0 0;">Interceptor</div>
<div style="position:absolute;left:201.64px;top:1020.02px;white-space:pre;font-family:'Liberation Sans';font-size:22px;font-weight:400;line-height:22px;color:#3c3c3c;z-index:5;transform:scaleX(0.8625);transform-origin:0 0;">Stocked Product</div>
<div style="position:absolute;left:17.47px;top:1055.05px;white-space:pre;font-family:'Liberation Sans';font-size:22px;font-weight:400;line-height:22px;color:#3c3c3c;z-index:5;transform:scaleX(0.8654);transform-origin:0 0;">Invoice fee</div>
<div style="position:absolute;left:201.64px;top:1055.05px;white-space:pre;font-family:'Liberation Sans';font-size:22px;font-weight:400;line-height:22px;color:#3c3c3c;z-index:5;transform:scaleX(0.8648);transform-origin:0 0;">Service</div>
<div style="position:absolute;left:17.49px;top:1090.08px;white-space:pre;font-family:'Liberation Sans';font-size:22px;font-weight:400;line-height:22px;color:#3c3c3c;z-index:5;transform:scaleX(0.8533);transform-origin:0 0;">Item A</div>
<div style="position:absolute;left:201.64px;top:1090.08px;white-space:pre;font-family:'Liberation Sans';font-size:22px;font-weight:400;line-height:22px;color:#3c3c3c;z-index:5;transform:scaleX(0.8625);transform-origin:0 0;">Stocked Product</div>
<div style="position:absolute;left:17.56px;top:1125.11px;white-space:pre;font-family:'Liberation Sans';font-size:22px;font-weight:400;line-height:22px;color:#3c3c3c;z-index:5;transform:scaleX(0.8197);transform-origin:0 0;">Item B</div>
<div style="position:absolute;left:201.64px;top:1125.11px;white-space:pre;font-family:'Liberation Sans';font-size:22px;font-weight:400;line-height:22px;color:#3c3c3c;z-index:5;transform:scaleX(0.8625);transform-origin:0 0;">Stocked Product</div>
<div style="position:absolute;left:17.57px;top:1160.14px;white-space:pre;font-family:'Liberation Sans';font-size:22px;font-weight:400;line-height:22px;color:#3c3c3c;z-index:5;transform:scaleX(0.8145);transform-origin:0 0;">Item C</div>
<div style="position:absolute;left:201.64px;top:1160.14px;white-space:pre;font-family:'Liberation Sans';font-size:22px;font-weight:400;line-height:22px;color:#3c3c3c;z-index:5;transform:scaleX(0.8625);transform-origin:0 0;">Stocked Product</div>
<div style="position:absolute;left:18.00px;top:1195.17px;white-space:pre;font-family:'Liberation Sans';font-size:22px;font-weight:400;line-height:22px;color:#3c3c3c;z-index:5;transform:scaleX(0.8292);transform-origin:0 0;">Joestar</div>
<div style="position:absolute;left:201.64px;top:1195.17px;white-space:pre;font-family:'Liberation Sans';font-size:22px;font-weight:400;line-height:22px;color:#3c3c3c;z-index:5;transform:scaleX(0.8625);transform-origin:0 0;">Stocked Product</div>
<div style="position:absolute;left:484.65px;top:149.70px;white-space:pre;font-family:'Liberation Sans';font-size:22px;font-weight:400;line-height:22px;color:#4a4a4a;z-index:5;transform:scaleX(0.9762);transform-origin:0 0;">New</div>
<div style="position:absolute;left:574.64px;top:149.70px;white-space:pre;font-family:'Liberation Sans';font-size:22px;font-weight:400;line-height:22px;color:#4a4a4a;z-index:5;transform:scaleX(0.8646);transform-origin:0 0;">Save</div>
<div style="position:absolute;left:673.64px;top:149.70px;white-space:pre;font-family:'Liberation Sans';font-size:22px;font-weight:400;line-height:22px;color:#4a4a4a;z-index:5;transform:scaleX(0.9314);transform-origin:0 0;">Label</div>
<div style="position:absolute;left:802.12px;top:149.70px;white-space:pre;font-family:'Liberation Sans';font-size:22px;font-weight:400;line-height:22px;color:#4a4a4a;z-index:5;transform:scaleX(0.8824);transform-origin:0 0;">Sell</div>
<div style="position:absolute;left:901.11px;top:149.70px;white-space:pre;font-family:'Liberation Sans';font-size:22px;font-weight:400;line-height:22px;color:#4a4a4a;z-index:5;transform:scaleX(0.9444);transform-origin:0 0;">Buy</div>
<div style="position:absolute;left:994.02px;top:149.70px;white-space:pre;font-family:'Liberation Sans';font-size:22px;font-weight:400;line-height:22px;color:#4a4a4a;z-index:5;transform:scaleX(0.9800);transform-origin:0 0;">Copy</div>
<div style="position:absolute;left:1092.00px;top:149.70px;white-space:pre;font-family:'Liberation Sans';font-size:22px;font-weight:400;line-height:22px;color:#4a4a4a;z-index:5;transform:scaleX(0.9028);transform-origin:0 0;">Version</div>
<div style="position:absolute;left:1214.61px;top:149.70px;white-space:pre;font-family:'Liberation Sans';font-size:22px;font-weight:400;line-height:22px;color:#4a4a4a;z-index:5;transform:scaleX(0.9455);transform-origin:0 0;">Deactivate</div>
<div style="position:absolute;left:1360.00px;top:149.70px;white-space:pre;font-family:'Liberation Sans';font-size:22px;font-weight:400;line-height:22px;color:#4a4a4a;z-index:5;transform:scaleX(0.9615);transform-origin:0 0;">Attachment (1)</div>
<div style="position:absolute;left:1545.73px;top:149.70px;white-space:pre;font-family:'Liberation Sans';font-size:22px;font-weight:400;line-height:22px;color:#4a4a4a;z-index:5;transform:scaleX(0.9738);transform-origin:0 0;">Showroom</div>
<div style="position:absolute;left:507.60px;top:227.00px;white-space:pre;font-family:'Liberation Sans';font-size:30px;font-weight:400;line-height:30px;color:#73a2e3;z-index:5;transform:scaleX(0.9507);transform-origin:0 0;">Basic</div>
<div style="position:absolute;left:508.55px;top:586.00px;white-space:pre;font-family:'Liberation Sans';font-size:30px;font-weight:400;line-height:30px;color:#73a2e3;z-index:5;transform:scaleX(0.9462);transform-origin:0 0;">Cost and Price</div>
<div style="position:absolute;left:1143.92px;top:227.00px;white-space:pre;font-family:'Liberation Sans';font-size:30px;font-weight:400;line-height:30px;color:#73a2e3;z-index:5;transform:scaleX(1.0253);transform-origin:0 0;">Image</div>
<div style="position:absolute;left:1143.49px;top:586.00px;white-space:pre;font-family:'Liberation Sans';font-size:30px;font-weight:400;line-height:30px;color:#73a2e3;z-index:5;transform:scaleX(1.0042);transform-origin:0 0;">Inventory</div>
<div style="position:absolute;left:512.43px;top:275.80px;white-space:pre;font-family:'Liberation Sans';font-size:22px;font-weight:400;line-height:22px;color:#505050;z-index:5;transform:scaleX(0.9855);transform-origin:0 0;">Product Name</div>
<div style="position:absolute;left:512.49px;top:319.00px;white-space:pre;font-family:'Liberation Sans';font-size:22px;font-weight:400;line-height:22px;color:#505050;z-index:5;transform:scaleX(0.9563);transform-origin:0 0;">Product Type</div>
<div style="position:absolute;left:513.42px;top:363.00px;white-space:pre;font-family:'Liberation Sans';font-size:22px;font-weight:400;line-height:22px;color:#505050;z-index:5;transform:scaleX(0.9814);transform-origin:0 0;">SKU</div>
<div style="position:absolute;left:513.43px;top:407.20px;white-space:pre;font-family:'Liberation Sans';font-size:22px;font-weight:400;line-height:22px;color:#505050;z-index:5;transform:scaleX(0.9716);transform-origin:0 0;">Category</div>
<div style="position:absolute;left:512.41px;top:453.80px;white-space:pre;font-family:'Liberation Sans';font-size:22px;font-weight:400;line-height:22px;color:#505050;z-index:5;transform:scaleX(0.9975);transform-origin:0 0;">Barcode</div>
<div style="position:absolute;left:512.38px;top:499.00px;white-space:pre;font-family:'Liberation Sans';font-size:22px;font-weight:400;line-height:22px;color:#505050;z-index:5;transform:scaleX(1.0121);transform-origin:0 0;">Description</div>
<div style="position:absolute;left:735.11px;top:272.20px;white-space:pre;font-family:'Liberation Sans';font-size:21px;font-weight:400;line-height:21px;color:#141414;z-index:5;transform:scaleX(0.8456);transform-origin:0 0;">Firebird</div>
<div style="position:absolute;left:742.70px;top:319.00px;white-space:pre;font-family:'Liberation Sans';font-size:21px;font-weight:400;line-height:21px;color:#141414;z-index:5;transform:scaleX(0.9000);transform-origin:0 0;">Stocked Product</div>
<div style="position:absolute;left:734.48px;top:360.20px;white-space:pre;font-family:'Liberation Sans';font-size:21px;font-weight:400;line-height:21px;color:#141414;z-index:5;transform:scaleX(0.9094);transform-origin:0 0;">BC000132</div>
<div style="position:absolute;left:742.70px;top:406.00px;white-space:pre;font-family:'Liberation Sans';font-size:21px;font-weight:400;line-height:21px;color:#141414;z-index:5;transform:scaleX(0.8986);transform-origin:0 0;">2019 collection</div>
<div style="position:absolute;left:734.48px;top:449.40px;white-space:pre;font-family:'Liberation Sans';font-size:21px;font-weight:400;line-height:21px;color:#141414;z-index:5;transform:scaleX(0.9094);transform-origin:0 0;">BC000037</div>
<div style="position:absolute;left:513.56px;top:632.40px;white-space:pre;font-family:'Liberation Sans';font-size:22px;font-weight:400;line-height:22px;color:#505050;z-index:5;transform:scaleX(1.0386);transform-origin:0 0;text-decoration:underline;text-decoration-thickness:1.5px;text-underline-offset:2px;">Cost</div>
<div style="position:absolute;left:821.40px;top:634.00px;white-space:pre;font-family:'Liberation Sans';font-size:20px;font-weight:400;line-height:20px;color:#707070;z-index:5;transform:scaleX(0.9393);transform-origin:0 0;">$10.00</div>
<div style="position:absolute;left:901.50px;top:635.50px;white-space:pre;font-family:'Liberation Sans';font-size:19px;font-weight:400;line-height:19px;color:#7a7a7a;z-index:5;text-decoration:underline;text-decoration-thickness:1px;text-underline-offset:2px;">Special Tax Rates</div>
<div style="position:absolute;left:765.34px;top:676.80px;white-space:pre;font-family:'Liberation Sans';font-size:22px;font-weight:400;line-height:22px;color:#444;z-index:5;transform:scaleX(1.0642);transform-origin:0 0;">Sales Price</div>
<div style="position:absolute;left:977.48px;top:675.00px;white-space:pre;font-family:'Liberation Sans';font-size:22px;font-weight:400;line-height:22px;color:#444;z-index:5;transform:scaleX(1.0606);transform-origin:0 0;">Markup</div>
<div style="position:absolute;left:512.19px;top:719.00px;white-space:pre;font-family:'Liberation Sans';font-size:22px;font-weight:400;line-height:22px;color:#505050;z-index:5;transform:scaleX(1.0065);transform-origin:0 0;">Normal Price</div>
<div style="position:absolute;left:821.40px;top:716.30px;white-space:pre;font-family:'Liberation Sans';font-size:20px;font-weight:400;line-height:20px;color:#141414;z-index:5;transform:scaleX(0.9508);transform-origin:0 0;">$25.50</div>
<div style="position:absolute;left:1008.03px;top:719.20px;white-space:pre;font-family:'Liberation Sans';font-size:19px;font-weight:400;line-height:19px;color:#8a8a8a;z-index:5;transform:scaleX(0.9681);transform-origin:0 0;text-decoration:underline;text-decoration-thickness:1px;text-underline-offset:2px;">155%</div>
<div style="position:absolute;left:512.19px;top:763.10px;white-space:pre;font-family:'Liberation Sans';font-size:22px;font-weight:400;line-height:22px;color:#505050;z-index:5;transform:scaleX(1.0065);transform-origin:0 0;">Retail pricing</div>
<div style="position:absolute;left:821.40px;top:760.40px;white-space:pre;font-family:'Liberation Sans';font-size:20px;font-weight:400;line-height:20px;color:#141414;z-index:5;transform:scaleX(0.9508);transform-origin:0 0;">$30.00</div>
<div style="position:absolute;left:1008.03px;top:763.20px;white-space:pre;font-family:'Liberation Sans';font-size:19px;font-weight:400;line-height:19px;color:#8a8a8a;z-index:5;transform:scaleX(0.9681);transform-origin:0 0;text-decoration:underline;text-decoration-thickness:1px;text-underline-offset:2px;">200%</div>
<div style="position:absolute;left:514.20px;top:807.20px;white-space:pre;font-family:'Liberation Sans';font-size:22px;font-weight:400;line-height:22px;color:#505050;z-index:5;transform:scaleX(0.9978);transform-origin:0 0;">Warehouse pricing</div>
<div style="position:absolute;left:1029.06px;top:806.50px;white-space:pre;font-family:'Liberation Sans';font-size:19px;font-weight:400;line-height:19px;color:#8a8a8a;z-index:5;transform:scaleX(0.9423);transform-origin:0 0;text-decoration:underline;text-decoration-thickness:1px;text-underline-offset:2px;">0%</div>
<div style="position:absolute;left:515.30px;top:850.60px;white-space:pre;font-family:'Liberation Sans';font-size:19px;font-weight:400;line-height:19px;color:#8a8a8a;z-index:5;transform:scaleX(1.0442);transform-origin:0 0;text-decoration:underline;text-decoration-thickness:1px;text-underline-offset:2px;">Add New</div>
<div style="position:absolute;left:514.00px;top:1125.60px;white-space:pre;font-family:'Liberation Sans';font-size:19px;font-weight:400;line-height:19px;color:#8a8a8a;z-index:5;transform:scaleX(0.9788);transform-origin:0 0;text-decoration:underline;text-decoration-thickness:1px;text-underline-offset:2px;">Add Custom Fields</div>
<div style="position:absolute;left:1413.40px;top:544.00px;white-space:pre;font-family:'Liberation Sans';font-size:21px;font-weight:400;line-height:21px;color:#111;z-index:5;transform:scaleX(1.0257);transform-origin:0 0;">Add Image</div>
<div style="position:absolute;left:1553.60px;top:544.00px;white-space:pre;font-family:'Liberation Sans';font-size:21px;font-weight:400;line-height:21px;color:#111;z-index:5;transform:scaleX(1.0492);transform-origin:0 0;">Delete Image</div>
<div style="position:absolute;left:1157.63px;top:649.70px;white-space:pre;font-family:'Liberation Sans';font-size:21px;font-weight:700;line-height:21px;color:#444;z-index:5;transform:scaleX(0.9744);transform-origin:0 0;">Location</div>
<div style="position:absolute;left:1355.44px;top:649.70px;white-space:pre;font-family:'Liberation Sans';font-size:21px;font-weight:700;line-height:21px;color:#444;z-index:5;transform:scaleX(0.9627);transform-origin:0 0;">Sublocation</div>
<div style="position:absolute;left:1545.43px;top:649.70px;white-space:pre;font-family:'Liberation Sans';font-size:21px;font-weight:700;line-height:21px;color:#444;z-index:5;transform:scaleX(0.9714);transform-origin:0 0;">Quantity</div>
<div style="position:absolute;left:1154.76px;top:699.60px;white-space:pre;font-family:'Liberation Sans';font-size:20px;font-weight:400;line-height:20px;color:#fff;z-index:5;transform:scaleX(0.9363);transform-origin:0 0;">Carlaw office</div>
<div style="position:absolute;left:1676.82px;top:699.60px;white-space:pre;font-family:'Liberation Sans';font-size:20px;font-weight:400;line-height:20px;color:#111;z-index:5;transform:scaleX(0.7778);transform-origin:0 0;">1</div>
<div style="position:absolute;left:1148.36px;top:1045.00px;white-space:pre;font-family:'Liberation Sans';font-size:22px;font-weight:400;line-height:22px;color:#555;z-index:5;transform:scaleX(1.0391);transform-origin:0 0;">Quantity on Hand</div>
<div style="position:absolute;left:1678.09px;top:1045.00px;white-space:pre;font-family:'Liberation Sans';font-size:22px;font-weight:400;line-height:22px;color:#333;z-index:5;transform:scaleX(1.0556);transform-origin:0 0;">1</div>
<div style="position:absolute;left:1211.85px;top:1104.90px;white-space:pre;font-family:'Liberation Sans';font-size:23px;font-weight:400;line-height:23px;color:#ffffff;z-index:5;transform:scaleX(0.9748);transform-origin:0 0;">Reordering</div>
<div style="position:absolute;left:1465.95px;top:1106.50px;white-space:pre;font-family:'Liberation Sans';font-size:21px;font-weight:400;line-height:21px;color:#111;z-index:5;transform:scaleX(1.0243);transform-origin:0 0;">Edit reorder settings</div>
<div style="position:absolute;left:474.85px;top:1196.50px;white-space:pre;font-family:'Liberation Sans';font-size:21px;font-weight:400;line-height:21px;color:#555;z-index:5;transform:scaleX(1.0775);transform-origin:0 0;">Product Info</div>
<div style="position:absolute;left:685.23px;top:1196.50px;white-space:pre;font-family:'Liberation Sans';font-size:21px;font-weight:400;line-height:21px;color:#555;z-index:5;transform:scaleX(1.0874);transform-origin:0 0;">Extra Info</div>
<div style="position:absolute;left:894.49px;top:1196.50px;white-space:pre;font-family:'Liberation Sans';font-size:21px;font-weight:400;line-height:21px;color:#555;z-index:5;transform:scaleX(1.0556);transform-origin:0 0;">Bill Of Materials</div>
<div style="position:absolute;left:1105.33px;top:1196.50px;white-space:pre;font-family:'Liberation Sans';font-size:21px;font-weight:400;line-height:21px;color:#555;z-index:5;transform:scaleX(1.0327);transform-origin:0 0;">Product Vendors</div>
<div style="position:absolute;left:1315.31px;top:1196.50px;white-space:pre;font-family:'Liberation Sans';font-size:21px;font-weight:400;line-height:21px;color:#555;z-index:5;transform:scaleX(1.0455);transform-origin:0 0;">Movement History</div>
<div style="position:absolute;left:1525.97px;top:1196.50px;white-space:pre;font-family:'Liberation Sans';font-size:21px;font-weight:400;line-height:21px;color:#555;z-index:5;transform:scaleX(1.0323);transform-origin:0 0;">Order History</div>
<div style="position:absolute;left:15.65px;top:1252.00px;white-space:pre;font-family:'Liberation Sans';font-size:18px;font-weight:400;line-height:18px;color:#333;z-index:5;transform:scaleX(1.1500);transform-origin:0 0;">Save successful</div>
<div style="position:absolute;left:1488.43px;top:1253.20px;white-space:pre;font-family:'Liberation Sans';font-size:18px;font-weight:400;line-height:18px;color:#444;z-index:5;transform:scaleX(1.0671);transform-origin:0 0;">Current User:  inFlow Support</div>
</body></html>
